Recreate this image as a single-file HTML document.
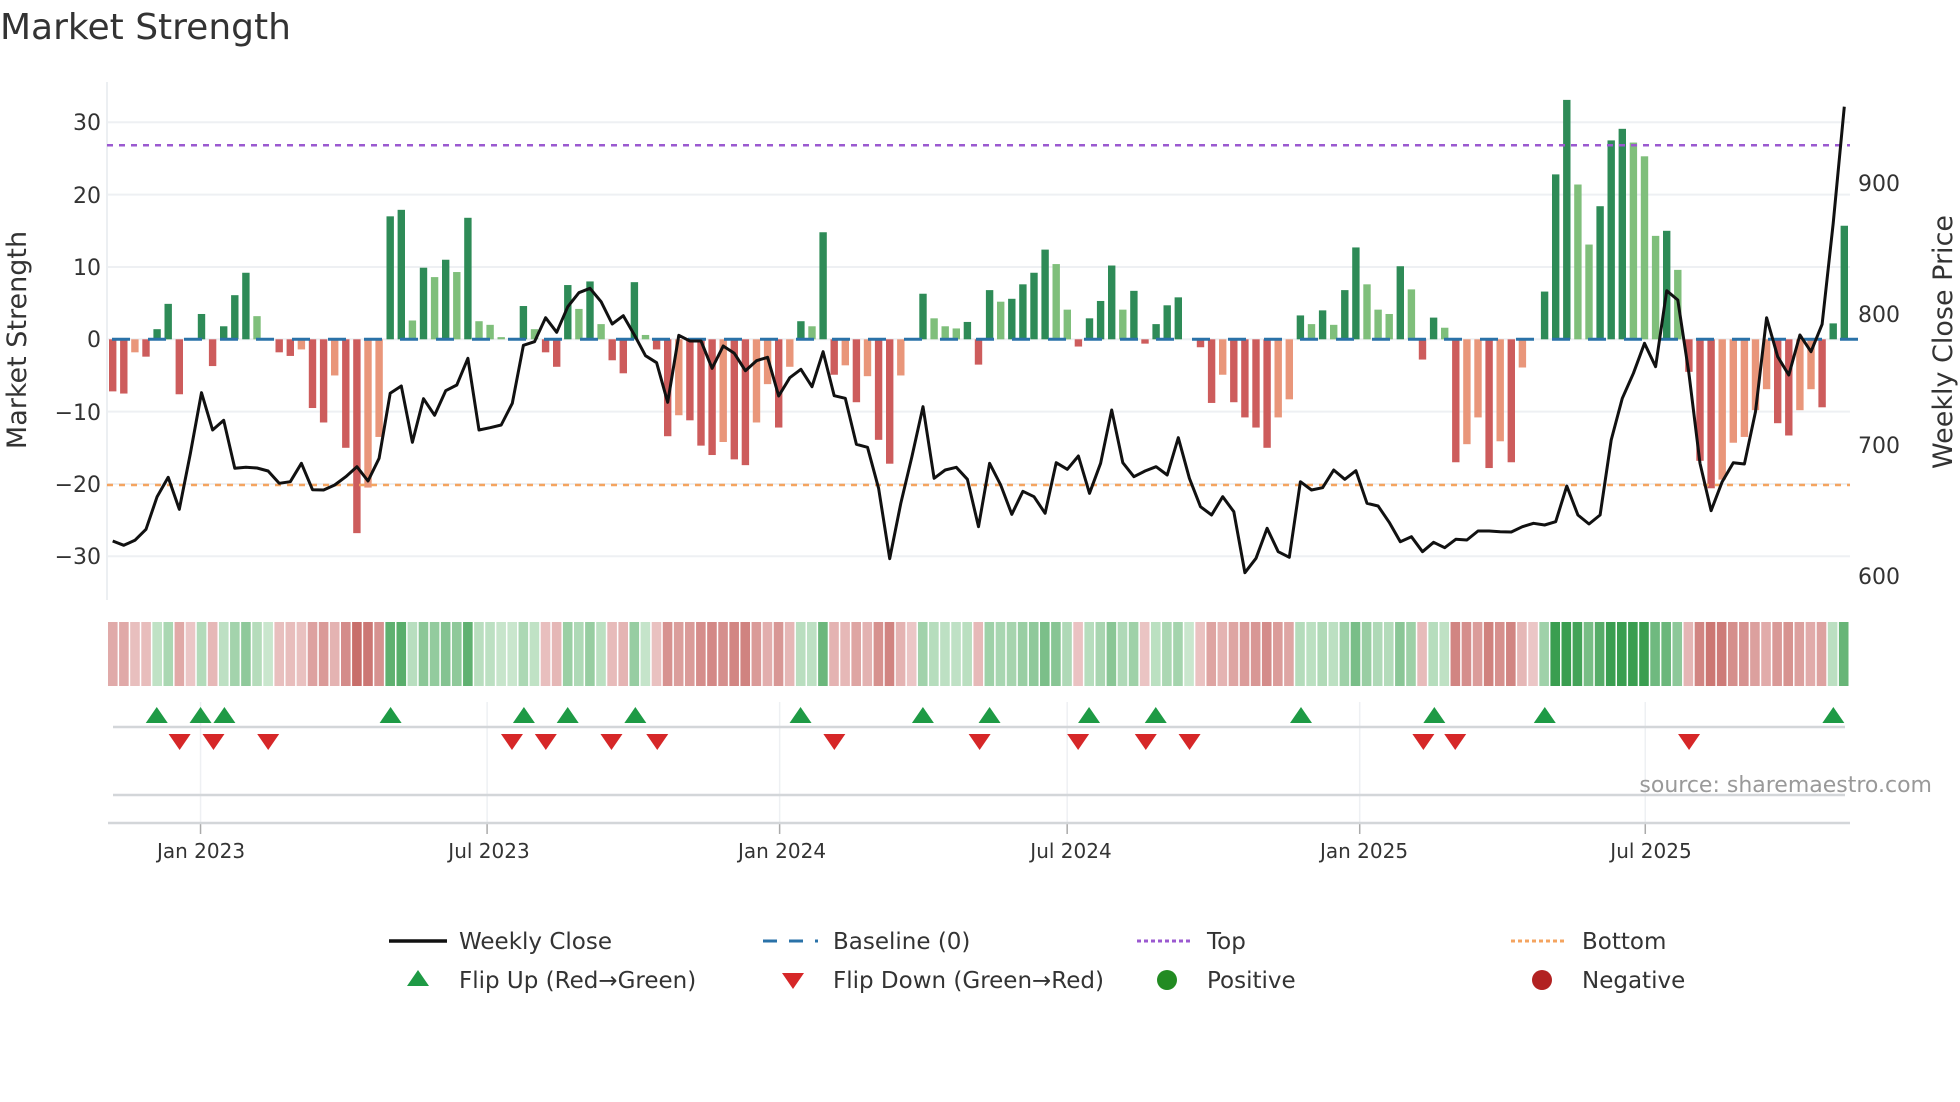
<!DOCTYPE html>
<html><head><meta charset="utf-8"><style>
html,body{margin:0;padding:0;background:#fff;}
svg{display:block;font-family:"DejaVu Sans","Liberation Sans",sans-serif;}
</style></head><body>
<svg id="c" width="1960" height="1102" viewBox="0 0 1960 1102" xmlns="http://www.w3.org/2000/svg">
<rect width="1960" height="1102" fill="#fff"/>
<text x="0" y="39" font-size="36" fill="#333">Market Strength</text>
<g id="grid"></g>
<line x1="107" y1="82" x2="107" y2="600" stroke="#eceff2" stroke-width="2"/>
<g id="bars"></g>
<g id="base"></g>
<line x1="107" y1="145.3" x2="1850" y2="145.3" stroke="#9b59d0" stroke-width="2.5" stroke-dasharray="6,6"/>
<line x1="107" y1="485" x2="1850" y2="485" stroke="#f4a460" stroke-width="2.5" stroke-dasharray="6,6"/>
<polyline id="price" fill="none" stroke="#111" stroke-width="3" stroke-linejoin="round"/>
<g font-size="22" fill="#333" text-anchor="end">
<text x="101" y="130">30</text><text x="101" y="203">20</text><text x="101" y="275">10</text>
<text x="101" y="347">0</text><text x="101" y="420">−10</text><text x="101" y="492">−20</text><text x="101" y="564">−30</text>
</g>
<g font-size="22" fill="#333">
<text x="1858" y="191">900</text><text x="1858" y="322">800</text><text x="1858" y="453">700</text><text x="1858" y="584">600</text>
</g>
<text transform="translate(26,340) rotate(-90)" font-size="27" fill="#333" text-anchor="middle">Market Strength</text>
<text transform="translate(1952,342) rotate(-90)" font-size="27" fill="#333" text-anchor="middle">Weekly Close Price</text>
<g id="heat"></g>
<g id="vgrid"></g>
<line x1="113" y1="727" x2="1845" y2="727" stroke="#d3d6d9" stroke-width="2.5"/>
<line x1="113" y1="795" x2="1845" y2="795" stroke="#d3d6d9" stroke-width="2.5"/>
<line x1="108" y1="823" x2="1850" y2="823" stroke="#d3d6d9" stroke-width="2.5"/>
<g id="tri"></g>
<text x="1932" y="792" font-size="22" fill="#999" text-anchor="end">source: sharemaestro.com</text>
<g font-size="20" fill="#333" text-anchor="middle">
<text x="201" y="858">Jan 2023</text><text x="489" y="858">Jul 2023</text><text x="782" y="858">Jan 2024</text>
<text x="1071" y="858">Jul 2024</text><text x="1364" y="858">Jan 2025</text><text x="1651" y="858">Jul 2025</text>
</g>
<g font-size="23" fill="#333" transform="translate(0,-4)">
<line x1="389" y1="945" x2="447" y2="945" stroke="#111" stroke-width="3.5"/>
<text x="459" y="953">Weekly Close</text>
<line x1="763" y1="945" x2="818" y2="945" stroke="#2a72a8" stroke-width="3" stroke-dasharray="14,12"/>
<text x="833" y="953">Baseline (0)</text>
<line x1="1137" y1="945" x2="1192" y2="945" stroke="#9b59d0" stroke-width="3" stroke-dasharray="4,3"/>
<text x="1207" y="953">Top</text>
<line x1="1511" y1="945" x2="1567" y2="945" stroke="#f4a460" stroke-width="3" stroke-dasharray="4,3"/>
<text x="1582" y="953">Bottom</text>
<polygon points="418,974 429,990 407,990" fill="#1e9a45"/>
<text x="459" y="992">Flip Up (Red→Green)</text>
<polygon points="782,977 804,977 793,993" fill="#d62728"/>
<text x="833" y="992">Flip Down (Green→Red)</text>
<circle cx="1167" cy="984" r="10" fill="#228b22"/>
<text x="1207" y="992">Positive</text>
<circle cx="1542" cy="984" r="10" fill="#b22222"/>
<text x="1582" y="992">Negative</text>
</g>
</svg>
<script>
var NS="http://www.w3.org/2000/svg";
function el(p,t,a){var e=document.createElementNS(NS,t);for(var k in a)e.setAttribute(k,a[k]);p.appendChild(e);return e;}
var D=[[-7.2,'R'],[-7.5,'R'],[-1.8,'O'],[-2.4,'R'],[1.4,'D'],[4.9,'D'],[-7.6,'R'],[0,''],[3.5,'D'],[-3.7,'R'],[1.8,'D'],[6.1,'D'],[9.2,'D'],[3.2,'L'],[0,''],[-1.8,'R'],[-2.3,'R'],[-1.4,'O'],[-9.5,'R'],[-11.5,'R'],[-5,'O'],[-15,'R'],[-26.8,'R'],[-20.5,'O'],[-13.5,'O'],[17,'D'],[17.9,'D'],[2.6,'L'],[9.9,'D'],[8.6,'L'],[11,'D'],[9.3,'L'],[16.8,'D'],[2.5,'L'],[2,'L'],[0.3,'L'],[0,''],[4.6,'D'],[1.4,'L'],[-1.8,'R'],[-3.8,'R'],[7.5,'D'],[4.2,'L'],[8,'D'],[2.1,'L'],[-2.9,'R'],[-4.7,'R'],[7.9,'D'],[0.6,'L'],[-1.4,'R'],[-13.4,'R'],[-10.5,'O'],[-11.2,'R'],[-14.7,'R'],[-16,'R'],[-14.2,'O'],[-16.6,'R'],[-17.4,'R'],[-11.5,'O'],[-6.2,'O'],[-12.2,'R'],[-3.8,'O'],[2.5,'D'],[1.8,'L'],[14.8,'D'],[-4.9,'R'],[-3.6,'O'],[-8.7,'R'],[-5.1,'O'],[-13.9,'R'],[-17.2,'R'],[-5,'O'],[0,''],[6.3,'D'],[2.9,'L'],[1.8,'L'],[1.5,'L'],[2.4,'D'],[-3.5,'R'],[6.8,'D'],[5.2,'L'],[5.6,'D'],[7.6,'D'],[9.2,'D'],[12.4,'D'],[10.4,'L'],[4.1,'L'],[-1,'R'],[2.9,'D'],[5.3,'D'],[10.2,'D'],[4.1,'L'],[6.7,'D'],[-0.6,'R'],[2.1,'D'],[4.7,'D'],[5.8,'D'],[0,''],[-1.1,'R'],[-8.8,'R'],[-4.9,'O'],[-8.7,'R'],[-10.8,'R'],[-12.2,'R'],[-15,'R'],[-10.8,'O'],[-8.3,'O'],[3.3,'D'],[2.1,'L'],[4,'D'],[2,'L'],[6.8,'D'],[12.7,'D'],[7.6,'L'],[4.1,'L'],[3.5,'L'],[10.1,'D'],[6.9,'L'],[-2.8,'R'],[3,'D'],[1.6,'L'],[-17,'R'],[-14.5,'O'],[-10.8,'O'],[-17.8,'R'],[-14.1,'O'],[-17,'R'],[-3.9,'O'],[0,''],[6.6,'D'],[22.8,'D'],[33.1,'D'],[21.4,'L'],[13.1,'L'],[18.4,'D'],[27.5,'D'],[29.1,'D'],[27.2,'L'],[25.3,'L'],[14.3,'L'],[15,'D'],[9.6,'L'],[-4.5,'R'],[-16.8,'R'],[-20.6,'R'],[-19.4,'O'],[-14.3,'O'],[-13.5,'O'],[-9.8,'O'],[-6.9,'O'],[-11.6,'R'],[-13.3,'R'],[-9.8,'O'],[-6.9,'O'],[-9.4,'R'],[2.2,'D'],[15.7,'D']];
var P=[1383,1396,1381,1348,1250,1192,1288,1120,938,1050,1021,1165,1162,1164,1173,1210,1205,1150,1229,1230,1215,1190,1160,1203,1135,940,918,1087,956,1006,932,915,835,1050,1043,1035,970,796,785,713,757,680,638,625,665,732,707,765,827,848,967,766,783,783,865,798,820,872,842,832,948,893,868,920,815,947,955,1093,1102,1225,1436,1270,1130,980,1195,1170,1162,1198,1340,1150,1215,1303,1234,1250,1300,1148,1168,1128,1240,1150,990,1148,1190,1173,1160,1185,1073,1195,1280,1305,1250,1295,1478,1435,1345,1415,1432,1205,1230,1223,1170,1198,1172,1270,1278,1327,1385,1370,1415,1387,1403,1378,1380,1353,1353,1355,1356,1340,1330,1335,1325,1218,1305,1332,1305,1080,955,880,790,860,632,660,880,1150,1292,1205,1148,1152,995,713,830,885,765,815,733,430,80];
var X0=112.7,S=11.1,Z=339.3,U=7.233;
function X(i){return X0+S*i;}
function sx(x){return 108+(x-108)*0.995;}
var g=document.getElementById('grid');
[30,20,10,0,-10,-20,-30].forEach(function(v){el(g,'line',{x1:107,x2:1850,y1:Z-U*v,y2:Z-U*v,stroke:'#eef0f3','stroke-width':2});});
var col={D:'#2e8b57',L:'#7fbf7b',R:'#cd5c5c',O:'#e9967a'};
var b=document.getElementById('bars');
D.forEach(function(d,i){var v=d[0];if(!v)return;var y=Z-U*v;el(b,'rect',{x:X(i)-3.7,width:7.4,y:Math.min(y,Z),height:Math.abs(Z-y),fill:col[d[1]]});});
var bs=document.getElementById('base');
for(var x=112;x<1845;x+=36){el(bs,'line',{x1:x,x2:x+18,y1:Z,y2:Z,stroke:'#2a72a8','stroke-width':3});}
document.getElementById('price').setAttribute('points',P.map(function(z,i){return X(i).toFixed(1)+','+(80+z/3).toFixed(1);}).join(' '));
function mix(a,c,t){var r='#';for(var k=0;k<3;k++){var h=Math.round(a[k]+(c[k]-a[k])*t).toString(16);r+=(h.length<2?'0':'')+h;}return r;}
var hm=document.getElementById('heat'),last=-1;
var HS=(1850-108)/D.length;
D.forEach(function(d,i){var v=d[0];var s=v>0?1:v<0?-1:last;if(v)last=s;var t=Math.min(1,0.12+Math.abs(v)/26);var c=s>0?mix([220,240,222],[58,158,80],t):mix([240,210,210],[200,110,106],t);
var x1=108+HS*i;el(hm,'rect',{x:x1,y:622,width:HS-1.5,height:64,fill:c});});
var vg=document.getElementById('vgrid');
[201,489,783,1072,1366,1653].forEach(function(x){x=sx(x);el(vg,'line',{x1:x,x2:x,y1:702,y2:823,stroke:'#eef0f3','stroke-width':1.5});el(vg,'line',{x1:x,x2:x,y1:823,y2:834,stroke:'#aaa','stroke-width':1.5});});
var tr=document.getElementById('tri');
[157,201,225,392,526,570,638,804,927,994,1094,1161,1307,1441,1552,1842].forEach(function(x){x=sx(x);el(tr,'polygon',{points:(x)+',707 '+(x+11)+',723 '+(x-11)+',723',fill:'#1e9a45'});});
[180,214,269,514,548,614,660,838,984,1083,1151,1195,1430,1462,1697].forEach(function(x){x=sx(x);el(tr,'polygon',{points:(x-11)+',734 '+(x+11)+',734 '+x+',750',fill:'#d62728'});});
</script>
</body></html>
